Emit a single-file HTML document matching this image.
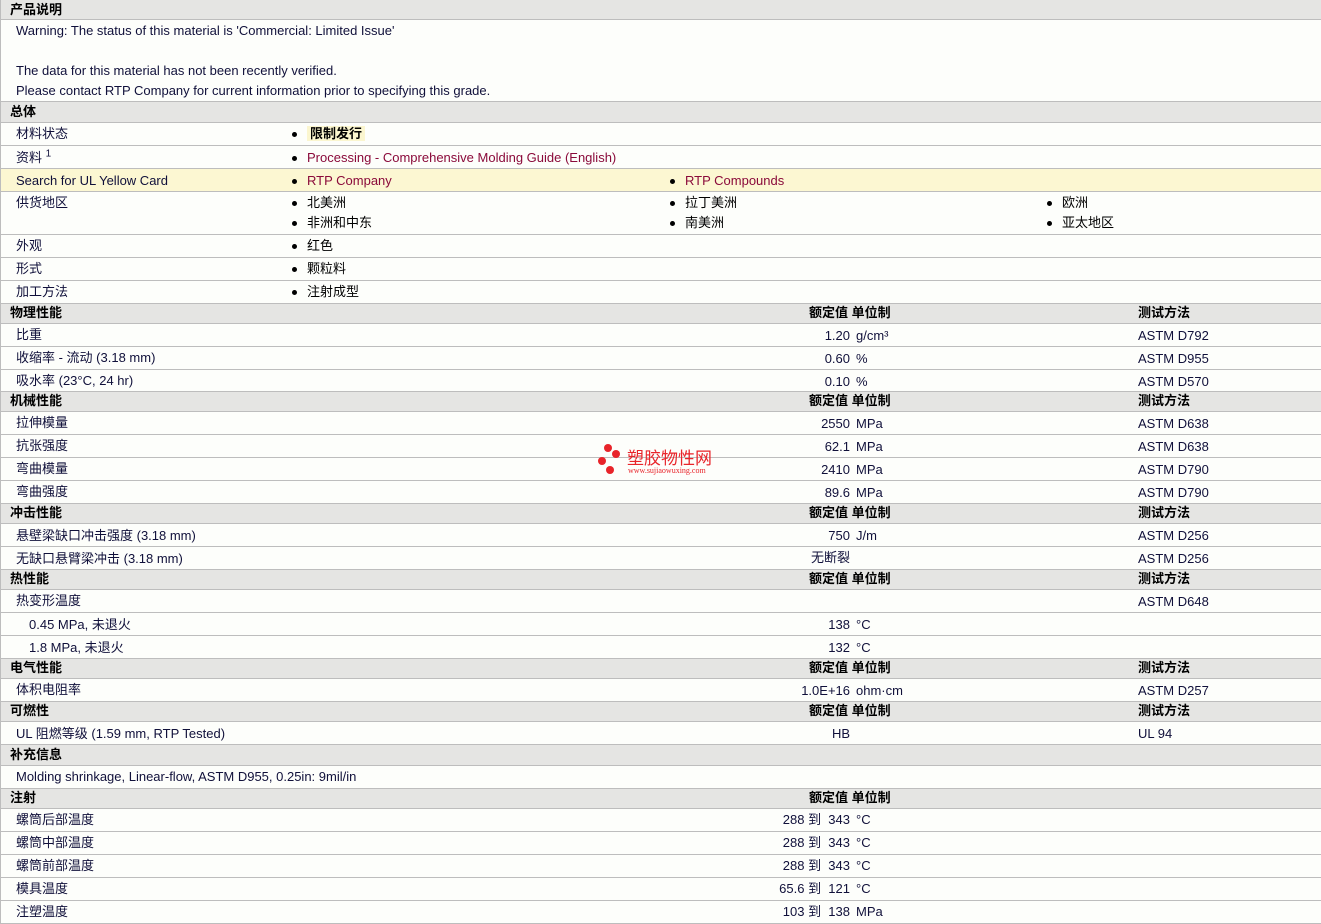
<!DOCTYPE html>
<html><head><meta charset="utf-8">
<style>
*{margin:0;padding:0;box-sizing:border-box}
body{width:1321px;height:922px;overflow:hidden;background:#fdfefb;font-family:"Liberation Sans","Noto Sans CJK SC",sans-serif;font-size:13px;line-height:17px;color:#10103a;position:relative}
.row{position:absolute;left:0;width:1321px;border-bottom:1px solid #bdbdbd;border-left:1px solid #bdbdbd}
.h{background:#e5e5e3;font-weight:bold;color:#000}
.row span{position:absolute;white-space:nowrap;line-height:17px;height:17px}
.l{left:15px}
.hl{left:9px}
.v{right:471px;text-align:right}
.u{left:855px}
.t{left:1137px}
.b{color:#000}
.b:before{content:"";position:absolute;left:-15px;top:7px;width:5px;height:5px;border-radius:50%;background:#000}
.c1{left:306px}.c2{left:684px}.c3{left:1061px}
a{color:#8a0a3a;text-decoration:none}
</style></head><body>

<div class="row h" style="top:0;height:20px"><span class="hl" style="top:1px">产品说明</span></div>
<div class="row" style="top:20px;height:82px">
<span class="l" style="top:2px">Warning: The status of this material is 'Commercial: Limited Issue'</span>
<span class="l" style="top:42px">The data for this material has not been recently verified.</span>
<span class="l" style="top:62px">Please contact RTP Company for current information prior to specifying this grade.</span></div>
<div class="row h" style="top:102px;height:21px"><span class="hl" style="top:1px">总体</span></div>
<div class="row" style="top:123px;height:23px"><span class="l" style="top:2px">材料状态</span><span class="b c1" style="top:2px"><b style="background:#fbf6cf;padding:0 3px">限制发行</b></span></div>
<div class="row" style="top:146px;height:23px"><span class="l" style="top:3px">资料 <sup style="font-size:10px;line-height:0">1</sup></span><span class="b c1" style="top:3px"><a>Processing - Comprehensive Molding Guide (English)</a></span></div>
<div class="row" style="top:169px;height:23px;background:#fcf7d2"><span class="l" style="top:3px">Search for UL Yellow Card</span><span class="b c1" style="top:3px"><a>RTP Company</a></span><span class="b c2" style="top:3px"><a>RTP Compounds</a></span></div>
<div class="row" style="top:192px;height:43px"><span class="l" style="top:2px">供货地区</span>
<span class="b c1" style="top:2px">北美洲</span><span class="b c2" style="top:2px">拉丁美洲</span><span class="b c3" style="top:2px">欧洲</span>
<span class="b c1" style="top:22px">非洲和中东</span><span class="b c2" style="top:22px">南美洲</span><span class="b c3" style="top:22px">亚太地区</span></div>
<div class="row" style="top:235px;height:23px"><span class="l" style="top:2px">外观</span><span class="b c1" style="top:2px">红色</span></div>
<div class="row" style="top:258px;height:23px"><span class="l" style="top:2px">形式</span><span class="b c1" style="top:2px">颗粒料</span></div>
<div class="row" style="top:281px;height:23px"><span class="l" style="top:2px">加工方法</span><span class="b c1" style="top:2px">注射成型</span></div>

<div class="row h" style="top:304px;height:20px"><span class="hl" style="top:0">物理性能</span><span style="left:808px;top:0">额定值 单位制</span><span class="t" style="top:0">测试方法</span></div>
<div class="row" style="top:324px;height:23px"><span class="l" style="top:2px">比重</span><span class="v" style="top:3px">1.20</span><span class="u" style="top:3px">g/cm³</span><span class="t" style="top:3px">ASTM D792</span></div>
<div class="row" style="top:347px;height:23px"><span class="l" style="top:2px">收缩率 - 流动 (3.18 mm)</span><span class="v" style="top:3px">0.60</span><span class="u" style="top:3px">%</span><span class="t" style="top:3px">ASTM D955</span></div>
<div class="row" style="top:370px;height:22px"><span class="l" style="top:2px">吸水率 (23°C, 24 hr)</span><span class="v" style="top:3px">0.10</span><span class="u" style="top:3px">%</span><span class="t" style="top:3px">ASTM D570</span></div>

<div class="row h" style="top:392px;height:20px"><span class="hl" style="top:0">机械性能</span><span style="left:808px;top:0">额定值 单位制</span><span class="t" style="top:0">测试方法</span></div>
<div class="row" style="top:412px;height:23px"><span class="l" style="top:2px">拉伸模量</span><span class="v" style="top:3px">2550</span><span class="u" style="top:3px">MPa</span><span class="t" style="top:3px">ASTM D638</span></div>
<div class="row" style="top:435px;height:23px"><span class="l" style="top:2px">抗张强度</span><span class="v" style="top:3px">62.1</span><span class="u" style="top:3px">MPa</span><span class="t" style="top:3px">ASTM D638</span></div>
<div class="row" style="top:458px;height:23px"><span class="l" style="top:2px">弯曲模量</span><span class="v" style="top:3px">2410</span><span class="u" style="top:3px">MPa</span><span class="t" style="top:3px">ASTM D790</span></div>
<div class="row" style="top:481px;height:23px"><span class="l" style="top:2px">弯曲强度</span><span class="v" style="top:3px">89.6</span><span class="u" style="top:3px">MPa</span><span class="t" style="top:3px">ASTM D790</span></div>

<div class="row h" style="top:504px;height:20px"><span class="hl" style="top:0">冲击性能</span><span style="left:808px;top:0">额定值 单位制</span><span class="t" style="top:0">测试方法</span></div>
<div class="row" style="top:524px;height:23px"><span class="l" style="top:3px">悬壁梁缺口冲击强度 (3.18 mm)</span><span class="v" style="top:3px">750</span><span class="u" style="top:3px">J/m</span><span class="t" style="top:3px">ASTM D256</span></div>
<div class="row" style="top:547px;height:23px"><span class="l" style="top:3px">无缺口悬臂梁冲击 (3.18 mm)</span><span class="v" style="top:2px">无断裂</span><span class="t" style="top:3px">ASTM D256</span></div>

<div class="row h" style="top:570px;height:20px"><span class="hl" style="top:0">热性能</span><span style="left:808px;top:0">额定值 单位制</span><span class="t" style="top:0">测试方法</span></div>
<div class="row" style="top:590px;height:23px"><span class="l" style="top:2px">热变形温度</span><span class="t" style="top:3px">ASTM D648</span></div>
<div class="row" style="top:613px;height:23px"><span style="left:28px;top:3px">0.45 MPa, 未退火</span><span class="v" style="top:3px">138</span><span class="u" style="top:3px">°C</span></div>
<div class="row" style="top:636px;height:23px"><span style="left:28px;top:3px">1.8 MPa, 未退火</span><span class="v" style="top:3px">132</span><span class="u" style="top:3px">°C</span></div>

<div class="row h" style="top:659px;height:20px"><span class="hl" style="top:0">电气性能</span><span style="left:808px;top:0">额定值 单位制</span><span class="t" style="top:0">测试方法</span></div>
<div class="row" style="top:679px;height:23px"><span class="l" style="top:2px">体积电阻率</span><span class="v" style="top:3px">1.0E+16</span><span class="u" style="top:3px">ohm·cm</span><span class="t" style="top:3px">ASTM D257</span></div>

<div class="row h" style="top:702px;height:20px"><span class="hl" style="top:0">可燃性</span><span style="left:808px;top:0">额定值 单位制</span><span class="t" style="top:0">测试方法</span></div>
<div class="row" style="top:722px;height:23px"><span class="l" style="top:3px">UL 阻燃等级 (1.59 mm, RTP Tested)</span><span class="v" style="top:3px">HB</span><span class="t" style="top:3px">UL 94</span></div>

<div class="row h" style="top:745px;height:21px"><span class="hl" style="top:1px">补充信息</span></div>
<div class="row" style="top:766px;height:23px"><span class="l" style="top:2px">Molding shrinkage, Linear-flow, ASTM D955, 0.25in: 9mil/in</span></div>

<div class="row h" style="top:789px;height:20px"><span class="hl" style="top:0">注射</span><span style="left:808px;top:0">额定值 单位制</span></div>
<div class="row" style="top:809px;height:23px"><span class="l" style="top:2px">螺筒后部温度</span><span class="v" style="top:2px">288 到&nbsp; 343</span><span class="u" style="top:2px">°C</span></div>
<div class="row" style="top:832px;height:23px"><span class="l" style="top:2px">螺筒中部温度</span><span class="v" style="top:2px">288 到&nbsp; 343</span><span class="u" style="top:2px">°C</span></div>
<div class="row" style="top:855px;height:23px"><span class="l" style="top:2px">螺筒前部温度</span><span class="v" style="top:2px">288 到&nbsp; 343</span><span class="u" style="top:2px">°C</span></div>
<div class="row" style="top:878px;height:23px"><span class="l" style="top:2px">模具温度</span><span class="v" style="top:2px">65.6 到&nbsp; 121</span><span class="u" style="top:2px">°C</span></div>
<div class="row" style="top:901px;height:23px"><span class="l" style="top:2px">注塑温度</span><span class="v" style="top:2px">103 到&nbsp; 138</span><span class="u" style="top:2px">MPa</span></div>

<div style="position:absolute;left:598px;top:443px;width:130px;height:36px">
<div style="position:absolute;left:6px;top:1px;width:8px;height:8px;border-radius:50%;background:#e8242a"></div>
<div style="position:absolute;left:14px;top:7px;width:8px;height:8px;border-radius:50%;background:#e8242a"></div>
<div style="position:absolute;left:0;top:14px;width:8px;height:8px;border-radius:50%;background:#e8242a"></div>
<div style="position:absolute;left:8px;top:23px;width:8px;height:8px;border-radius:50%;background:#e8242a"></div>
<div style="position:absolute;left:29px;top:4px;font-size:17px;color:#e8242a;font-family:'Noto Sans CJK SC',sans-serif;line-height:20px">塑胶物性网</div>
<div style="position:absolute;left:30px;top:23px;font-size:8px;line-height:10px;color:#e8242a;font-family:'Liberation Serif',serif">www.sujiaowuxing.com</div>
</div>
</body></html>
